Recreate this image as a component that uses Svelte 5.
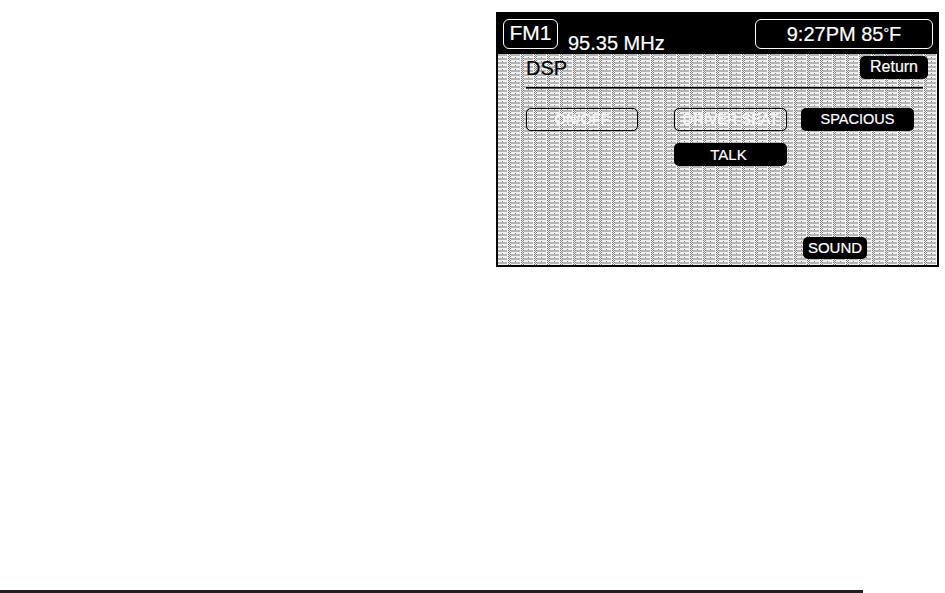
<script>
    let row1 = [
        { label: 'ON/OFF', off: true },
        { label: 'DRIVER SEAT', off: true },
        { label: 'SPACIOUS', off: false }
    ]
</script>

<div class="page">
    <div class="screen">
        <div class="head">
            <div class="band">FM1</div>
            <div class="freq">95.35 MHz</div>
            <div class="clock">9:27PM 85<span class="deg">°</span>F</div>
        </div>
        <div class="body">
            <div class="title-row">
                <div class="title">DSP</div>
                <button class="btn return">Return</button>
            </div>
            <div class="rule"></div>
            <div class="row">
                {#each row1 as b}
                    <button class="btn wide" class:off={b.off}>{b.label}</button>
                {/each}
            </div>
            <div class="row second">
                <button class="btn wide talk">TALK</button>
            </div>
            <div class="foot">
                <button class="btn sound">SOUND</button>
            </div>
        </div>
    </div>
    <div class="bottom-line"></div>
</div>

<style>
    :global(body) {
        background: #fff;
        overflow: hidden;
    }

    .page {
        width: 945px;
        height: 593px;
        display: flex;
        flex-direction: column;
        font-family: "Liberation Sans", Arial, sans-serif;
    }

    .screen {
        width: 443px;
        height: 255px;
        margin: 12px 0 0 496px;
        box-sizing: border-box;
        border: 1px solid #000;
        border-width: 1px 2px 2px 2px;
        display: flex;
        flex-direction: column;
    }

    .head {
        height: 41px;
        flex: none;
        background: #000;
        color: #fff;
        display: flex;
        align-items: flex-start;
        padding: 6px 4px 0 5px;
        box-sizing: border-box;
        -webkit-text-stroke: 0.2px #fff;
    }

    .band {
        width: 55px;
        height: 30px;
        box-sizing: border-box;
        border: 1px solid #fff;
        border-radius: 6px;
        font-size: 21px;
        line-height: 26px;
        text-align: center;
    }

    .freq {
        font-size: 20px;
        line-height: 22px;
        margin: 13px 0 0 10px;
    }

    .clock {
        width: 178px;
        height: 30px;
        margin-left: auto;
        box-sizing: border-box;
        border: 1px solid #fff;
        border-radius: 6px;
        font-size: 20px;
        line-height: 27px;
        text-align: center;
    }

    .deg {
        font-size: 14px;
        vertical-align: 3px;
    }

    .body {
        flex: 1;
        padding: 2px 9px 6px 28px;
        display: flex;
        flex-direction: column;
        background-color: #f0f0f0;
        background-image:
            conic-gradient(from 270deg at 1px 1px, #777 90deg, transparent 0),
            conic-gradient(from 270deg at 1px 1px, #777 90deg, transparent 0),
            conic-gradient(from 270deg at 1px 1px, #888 90deg, transparent 0),
            conic-gradient(from 270deg at 1px 1px, #888 90deg, transparent 0),
            conic-gradient(from 270deg at 9px 2px, #b4b4b4 90deg, transparent 0);
        background-size: 13px 2px, 13px 2px, 13px 2px, 13px 4px, 13px 4px;
        background-position: 10px 0, 12px 0, 11px 1px, 4px 3px, 0 0;
    }

    .title-row {
        display: flex;
        justify-content: space-between;
        align-items: flex-start;
        height: 27px;
    }

    .title {
        font-size: 20px;
        line-height: 24px;
        color: #000;
        -webkit-text-stroke: 0.2px #000;
    }

    .rule {
        height: 1px;
        width: 397px;
        background: #000;
        margin-top: 4px;
        box-shadow: 0 1px 0 #555;
    }

    .btn {
        font-family: inherit;
        background: #000;
        color: #fff;
        border: 0;
        border-radius: 5px;
        padding: 0 0 1px;
        -webkit-text-stroke: 0.2px #fff;
    }

    .return {
        width: 68px;
        height: 23px;
        font-size: 16px;
    }

    .row {
        display: flex;
        margin-top: 20px;
        gap: 14px;
    }

    .row.second {
        margin-top: 12px;
        padding-left: 148px;
    }

    .wide {
        width: 113px;
        height: 23px;
        font-size: 14.5px;
    }

    .talk {
        font-size: 15px;
        padding-right: 4px;
    }

    .wide:first-child.off {
        width: 112px;
        margin-right: 22px;
    }

    .off {
        background: transparent;
        border: 1px solid #000;
        box-shadow: 0 0 1px #222;
        color: #f4f4f4;
        -webkit-text-stroke: 0;
        text-shadow: 0 0 1px #fff;
    }

    .foot {
        margin-top: auto;
        padding-left: 277px;
    }

    .sound {
        width: 64px;
        height: 22px;
        font-size: 15px;
        display: block;
    }

    .bottom-line {
        margin-top: auto;
        width: 863px;
        height: 3px;
        background: #231f20;
    }
</style>
